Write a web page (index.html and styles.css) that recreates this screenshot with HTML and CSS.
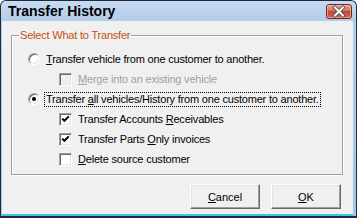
FILE: index.html
```html
<!DOCTYPE html>
<html>
<head>
<meta charset="utf-8">
<link rel="stylesheet" href="styles.css">
</head>
<body>
<div class="window">
  <div class="titlebar">
    <span class="title">Transfer History</span>
    <span class="close">
      <svg width="26" height="15" viewBox="0 0 26 15">
        <defs>
          <linearGradient id="cg" x1="0" y1="0" x2="0" y2="1">
            <stop offset="0" stop-color="#e7a89b"/>
            <stop offset="0.45" stop-color="#d7715f"/>
            <stop offset="0.5" stop-color="#c4463a"/>
            <stop offset="1" stop-color="#d0695a"/>
          </linearGradient>
        </defs>
        <rect x="0.5" y="0.5" width="25" height="14" rx="2.5" fill="url(#cg)" stroke="#6b2a26"/>
        <rect x="1.5" y="1.5" width="23" height="12" rx="1.5" fill="none" stroke="#eec3ba" stroke-opacity="0.6"/>
        <path d="M9 3.5 L17 11.5 M17 3.5 L9 11.5" stroke="#4a4a4a" stroke-width="3.6" stroke-linecap="square"/>
        <path d="M9 3.5 L17 11.5 M17 3.5 L9 11.5" stroke="#ffffff" stroke-width="2" stroke-linecap="square"/>
      </svg>
    </span>
  </div>
  <div class="client">
    <div class="group">
      <span class="legend">Select What to Transfer</span>
      <div class="row">
        <span class="radio"></span>
        <span class="label"><u>T</u>ransfer vehicle from one customer to another.</span>
      </div>
      <div class="row sub disabled">
        <span class="check"></span>
        <span class="label"><u>M</u>erge into an existing vehicle</span>
      </div>
      <div class="row">
        <span class="radio on"><span class="dot"></span></span>
        <span class="label focus">Transfer <u>a</u>ll vehicles/History from one customer to another.</span>
      </div>
      <div class="row sub">
        <span class="check"><svg width="9" height="9" viewBox="0 0 9 9"><path d="M1.2 3.6 L3.4 5.8 L7.8 1.4" stroke="#000" stroke-width="2" fill="none"/></svg></span>
        <span class="label">Transfer Accounts <u>R</u>eceivables</span>
      </div>
      <div class="row sub">
        <span class="check"><svg width="9" height="9" viewBox="0 0 9 9"><path d="M1.2 3.6 L3.4 5.8 L7.8 1.4" stroke="#000" stroke-width="2" fill="none"/></svg></span>
        <span class="label">Transfer Parts <u>O</u>nly invoices</span>
      </div>
      <div class="row sub">
        <span class="check"></span>
        <span class="label"><u>D</u>elete source customer</span>
      </div>
    </div>
    <div class="buttons">
      <button class="btn"><u>C</u>ancel</button>
      <button class="btn"><u>O</u>K</button>
    </div>
  </div>
</div>
</body>
</html>
```

FILE: styles.css
```css
html, body {
  margin: 0;
  padding: 0;
  background: #ffffff;
}

.window {
  box-sizing: border-box;
  width: 357px;
  height: 218px;
  border: 1px solid #1e2b3c;
  border-bottom-width: 2px;
  border-radius: 6px 6px 0 0;
  background: linear-gradient(#c8dbf1 0px, #b3cce9 20px, #a6c3e5 100%);
  padding: 0 3px 0 2px;
  display: flex;
  flex-direction: column;
  font-family: "Liberation Sans", Arial, sans-serif;
  font-size: 11px;
  color: #000;
}

.titlebar {
  height: 20px;
  display: flex;
  align-items: center;
  padding-left: 5px;
}

.title {
  font-weight: bold;
  font-size: 14px;
  line-height: 16px;
  margin-top: 0px;
}

.close {
  margin-left: auto;
  margin-right: 1px;
  width: 26px;
  height: 15px;
  display: block;
}

.close svg {
  display: block;
}

.client {
  flex: 1;
  background: #f0f0f0;
  border-bottom: 2px solid #3fc2ec;
  margin-left: -1px;
  padding-left: 1px;
  display: flex;
  flex-direction: column;
}

.group {
  position: relative;
  margin: 14px 10px 0 8px;
  height: 140px;
  box-sizing: border-box;
  border: 1px solid #a0a0a0;
  box-shadow: 1px 1px 0 #ffffff, inset 1px 1px 0 #ffffff;
  padding: 13px 0 0 16px;
  letter-spacing: -0.2px;
}

.legend {
  position: absolute;
  top: -7px;
  left: 7px;
  padding: 0 1px;
  background: #f0f0f0;
  color: #c4500f;
  line-height: 13px;
}

.row {
  height: 20px;
  display: flex;
  align-items: center;
}

.row.sub {
  padding-left: 31px;
}

.label {
  line-height: 13px;
  white-space: nowrap;
  margin-left: 6px;
  border: 1px solid transparent;
  padding: 0 1px;
  margin-left: 4px;
}

.label.focus {
  border: 1px dotted #000;
}

.disabled .label {
  color: #a0a0a0;
}

.radio {
  box-sizing: border-box;
  width: 12px;
  height: 12px;
  border-radius: 50%;
  background: #ffffff;
  border: 1px solid;
  border-color: #a0a0a0 #ffffff #ffffff #a0a0a0;
  box-shadow: inset 1px 1px 0 #6a6a6a, inset -1px -1px 0 #e3e3e3;
  display: flex;
  align-items: center;
  justify-content: center;
}

.dot {
  width: 4px;
  height: 4px;
  border-radius: 50%;
  background: #000;
}

.check {
  box-sizing: border-box;
  width: 13px;
  height: 13px;
  background: #ffffff;
  border: 1px solid;
  border-color: #a0a0a0 #ffffff #ffffff #a0a0a0;
  box-shadow: inset 1px 1px 0 #696969, inset -1px -1px 0 #e3e3e3;
  padding: 1px 0 0 1px;
  display: block;
}

.check svg {
  display: block;
  margin: 0 0 0 0;
}

.disabled .check {
  background: #f0f0f0;
}

.buttons {
  display: flex;
  justify-content: flex-end;
  gap: 11px;
  margin-top: 9px;
  padding-right: 12px;
}

.btn {
  box-sizing: border-box;
  width: 70px;
  height: 25px;
  margin: 0;
  padding: 0;
  font-family: "Liberation Sans", Arial, sans-serif;
  font-size: 11px;
  color: #000;
  background: #f0f0f0;
  border: 1px solid;
  border-color: #ffffff #696969 #696969 #ffffff;
  box-shadow: inset -1px -1px 0 #a0a0a0, inset 1px 1px 0 #e3e3e3;
  border-radius: 0;
}
```
